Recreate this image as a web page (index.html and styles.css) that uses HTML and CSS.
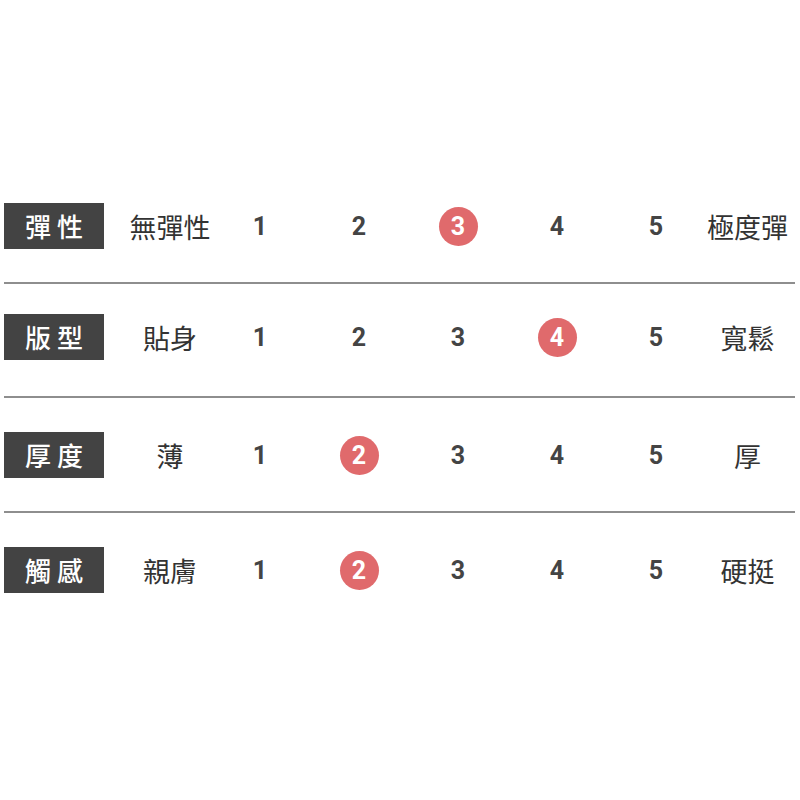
FILE: index.html
```html
<!DOCTYPE html>
<html lang="zh-Hant">
<head>
<meta charset="utf-8">
<link rel="stylesheet" href="styles.css">
</head>
<body>
<div class="table">
  <div class="row">
    <div class="tag">彈性</div>
    <div class="desc">無彈性</div>
    <div class="nums"><span class="n">1</span><span class="n">2</span><span class="n on">3</span><span class="n">4</span><span class="n">5</span></div>
    <div class="end">極度彈</div>
  </div>
  <div class="row r2">
    <div class="tag">版型</div>
    <div class="desc">貼身</div>
    <div class="nums"><span class="n">1</span><span class="n">2</span><span class="n">3</span><span class="n on">4</span><span class="n">5</span></div>
    <div class="end">寬鬆</div>
  </div>
  <div class="row">
    <div class="tag">厚度</div>
    <div class="desc">薄</div>
    <div class="nums"><span class="n">1</span><span class="n on">2</span><span class="n">3</span><span class="n">4</span><span class="n">5</span></div>
    <div class="end">厚</div>
  </div>
  <div class="row last">
    <div class="tag">觸感</div>
    <div class="desc">親膚</div>
    <div class="nums"><span class="n">1</span><span class="n on">2</span><span class="n">3</span><span class="n">4</span><span class="n">5</span></div>
    <div class="end">硬挺</div>
  </div>
</div>
</body>
</html>
```
FILE: styles.css
```css
html, body {
  margin: 0;
  padding: 0;
  background: #ffffff;
}
body {
  font-family: "Noto Sans CJK TC", "Noto Sans", sans-serif;
  color: #333333;
}
.table {
  padding-top: 169px;
  margin-left: 4px;
  width: 791px;
}
.row {
  display: flex;
  align-items: center;
  padding: 34px 0 33px;
  border-bottom: 2px solid #8e8e8e;
}
.row.r2 {
  padding-top: 30px;
  padding-bottom: 36px;
}
.row.last {
  border-bottom: none;
}
.tag {
  width: 100px;
  height: 46px;
  background: #434343;
  color: #ffffff;
  font-size: 26px;
  font-weight: 500;
  letter-spacing: 6px;
  text-indent: 6px;
  display: flex;
  align-items: center;
  justify-content: center;
  line-height: 1;
}
.desc {
  width: 132px;
  text-align: center;
  font-size: 27px;
  line-height: 1;
  color: #333333;
}
.nums {
  display: flex;
  gap: 51px;
}
.n {
  position: relative;
  z-index: 0;
  width: 48px;
  height: 39px;
  display: flex;
  align-items: center;
  justify-content: center;
  font-family: Roboto, "Liberation Sans", sans-serif;
  font-weight: 700;
  font-size: 25px;
  color: #444444;
}
.n.on {
  color: #ffffff;
}
.n.on::after {
  content: "";
  position: absolute;
  left: 4.5px;
  top: 0;
  width: 39px;
  height: 39px;
  border-radius: 50%;
  background: #e06a6c;
  z-index: -1;
}
.end {
  flex: 1;
  padding-left: 20px;
  text-align: center;
  font-size: 27px;
  line-height: 1;
  color: #333333;
}
```
